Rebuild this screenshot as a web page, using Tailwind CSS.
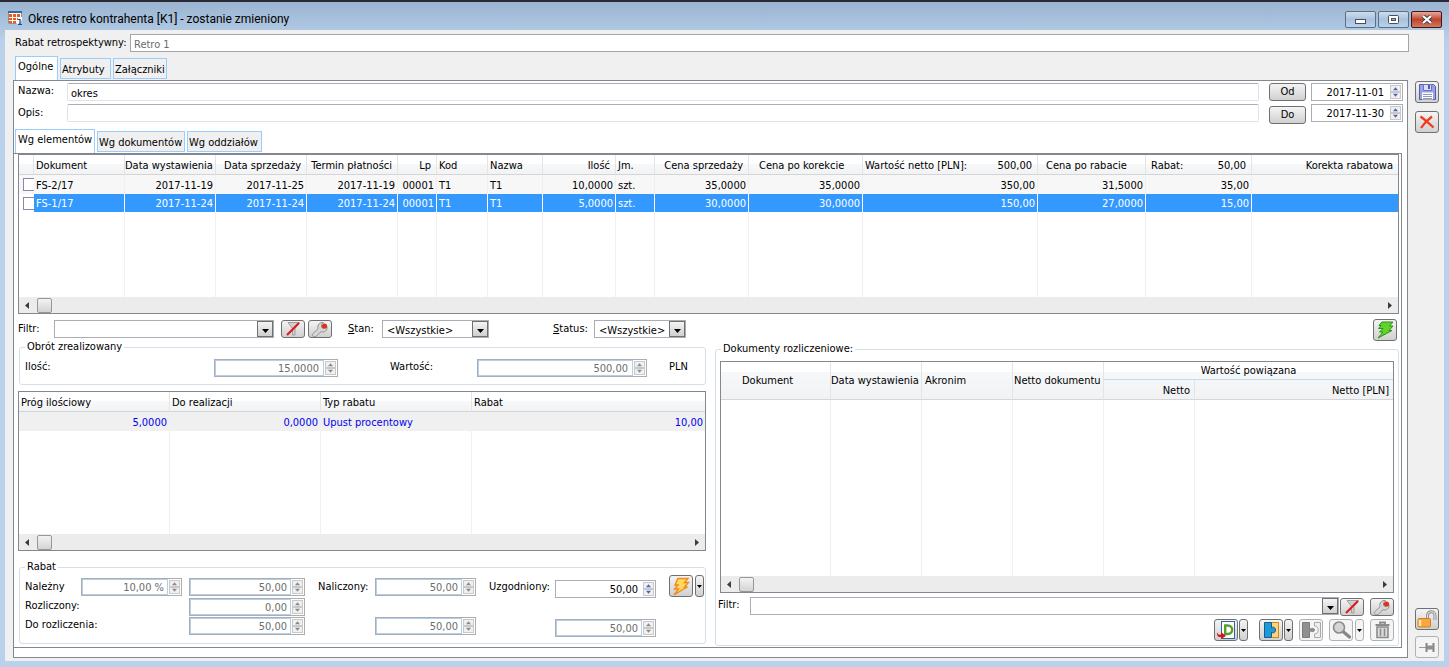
<!DOCTYPE html>
<html lang="pl">
<head>
<meta charset="utf-8">
<title>Okres retro kontrahenta [K1]</title>
<script src="https://cdn.jsdelivr.net/npm/@tailwindcss/browser@4"></script>
</head>
<body class="h-screen overflow-hidden bg-[#b9d1ea] font-['DejaVu_Sans_Condensed','DejaVu_Sans',sans-serif] text-[11px] leading-4 text-black">
<svg class="hidden">
  <symbol id="up" viewBox="0 0 9 6"><path d="M1.500 5h6L4.500 1.500z" fill="currentColor"/></symbol>
  <symbol id="down" viewBox="0 0 9 6"><path d="M1.500 1h6L4.500 4.500z" fill="currentColor"/></symbol>
  <symbol id="drop" viewBox="0 0 7 4"><path d="M0 0h7L3.500 4z" fill="currentColor"/></symbol>
  <symbol id="left" viewBox="0 0 4 7"><path d="M4 0v7L0 3.500z" fill="#3c3c3c"/></symbol>
  <symbol id="right" viewBox="0 0 4 7"><path d="M0 0v7L4 3.500z" fill="#3c3c3c"/></symbol>
  <symbol id="funnel" viewBox="0 0 16 16">
    <path d="M3 1.500h11.500L10 7.500V14H7.500V7.500z" fill="#d0d0d0" stroke="#a0a0a0"/>
    <path d="M2 14L14 2" stroke="#e0191c" stroke-width="2.200"/>
  </symbol>
  <symbol id="wrench" viewBox="0 0 18 16">
    <path d="M1.500 13l5.500-5.200C6 4 8.500 1 12.500 1.500L10.500 4v2.500l2.500 1 3-2c.8 3.500-2.500 6.500-6 5.200L5.500 15C3 16.500.5 15 1.500 13z" fill="#d6d6d6" stroke="#929292"/>
    <circle cx="13.500" cy="5" r="2.600" fill="#e0311b"/>
  </symbol>
</svg>

<div class="flex h-full flex-col border-t-2 border-[#2a2a35] bg-linear-to-b from-[#9ab3d0] to-[#b9d1ea] to-6%">
  <header class="flex h-7 shrink-0 items-center gap-1.5 pr-[7px] pl-2">
    <svg class="mt-1 h-4 w-3.5" viewBox="0 0 14 16"><path d="M0 1h14v9l-4 4H0z" fill="#fff"/><rect x="0" y="1" width="14" height="2" fill="#34699c"/><path d="M.5 3v10.500h8M13.500 3v4" stroke="#8a8f98" fill="none"/><g fill="#f2581c"><path d="M1 4h3v3H1zM5 4h3v3H5zM9 4h3v3H9zM1 8h3v2H1zM5 8h3v2H5zM9 8h1v2H9zM1 11h3v2H1zM5 11h3v2H5z"/></g><path d="M10 9.500h2V14M10 14.500h4" fill="none" stroke="#1a4a80" stroke-width="1.200"/></svg>
    <h1 class="mt-1.5 flex-1 font-[Roboto,sans-serif] text-xs leading-4">Okres retro kontrahenta [K1] - zostanie zmieniony</h1>
    <div class="mt-1.5 flex gap-0.5">
      <button aria-label="Minimalizuj" class="grid h-[17px] w-[31px] place-items-center rounded-xs border border-[#5c6f88] bg-linear-to-b from-[#cfdded] via-[#a9c1dc] to-[#b9d2ec]"><svg class="mt-1 h-[5px] w-[11px]" viewBox="0 0 11 5"><rect x=".5" y=".5" width="10" height="4" fill="#fff" stroke="#44505f"/></svg></button>
      <button aria-label="Maksymalizuj" class="grid h-[17px] w-[31px] place-items-center rounded-xs border border-[#5c6f88] bg-linear-to-b from-[#cfdded] via-[#a9c1dc] to-[#b9d2ec]"><svg class="h-[9px] w-[11px]" viewBox="0 0 11 9"><rect x=".5" y=".5" width="10" height="8" rx="1" fill="#fff" stroke="#44505f"/><rect x="3.500" y="3.500" width="4" height="2" fill="#9db7d4" stroke="#44505f"/></svg></button>
      <button aria-label="Zamknij" class="grid h-[17px] w-[31px] place-items-center rounded-xs border border-[#43151a] bg-linear-to-b from-[#e5a99c] via-[#c0432e] to-[#cf7a60]"><svg class="h-[9px] w-3" viewBox="0 0 12 9"><path d="M2 1l8 7M10 1L2 8" stroke="#46404a" stroke-width="4"/><path d="M2 1l8 7M10 1L2 8" stroke="#fff" stroke-width="2.200"/></svg></button>
    </div>
  </header>

  <main class="mr-[5px] mb-1.5 ml-[5px] flex min-h-0 flex-1 flex-col bg-[#f0f0f0] [&_input]:pt-0.5">
    <div class="mt-1 mr-[35px] ml-2.5 flex shrink-0 items-center">
      <label for="retro" class="w-[115px] whitespace-nowrap">Rabat retrospektywny:</label>
      <input id="retro" disabled value="Retro 1" class="h-[18px] min-w-0 flex-1 border border-[#a5a5a5] bg-white px-[3px] text-[#6d6d6d]">
    </div>
    <div class="flex min-h-0 flex-1 pr-[5px]">
      <div class="mb-[3px] ml-2 flex min-h-0 min-w-0 flex-1 flex-col">
        <nav class="mt-1 flex h-6 shrink-0 items-end gap-0.5 pl-0.5">
          <button class="h-6 w-[43px] border border-b-0 border-[#99ccff] bg-white pb-[3px] pl-0.5 text-left">Ogólne</button>
          <button class="mb-px h-[21px] w-[51px] border border-[#99ccff] pt-0.5 pl-px text-left">Atrybuty</button>
          <button class="mb-px h-[21px] w-[54px] border border-[#99ccff] pt-0.5 pl-px text-left">Załączniki</button>
        </nav>
        <div class="flex min-h-0 flex-1 flex-col border border-[#828790] bg-white">
          <section class="flex h-12 shrink-0 pt-0.5 pr-1 pl-1">
            <div class="flex min-w-0 flex-1 flex-col gap-[3px]">
              <div class="flex"><label for="nazwa" class="w-[49px]">Nazwa:</label><input id="nazwa" value="okres" class="h-[18px] min-w-0 flex-1 rounded-xs border border-[#dfe2ea] border-t-[#abadb3] px-[3px]"></div>
              <div class="flex"><label for="opis" class="w-[49px] pt-px">Opis:</label><input id="opis" class="h-[18px] min-w-0 flex-1 rounded-xs border border-[#dfe2ea] border-t-[#abadb3] px-[3px]"></div>
            </div>
            <div class="ml-2.5 flex flex-col gap-[5px]">
              <button class="h-[18px] w-[37px] rounded-[3px] border border-[#707070] bg-linear-to-b from-[#f4f4f4] to-[#d0d0d0]">Od</button>
              <button class="h-[18px] w-[37px] rounded-[3px] border border-[#707070] bg-linear-to-b from-[#f4f4f4] to-[#d0d0d0]">Do</button>
            </div>
            <div class="ml-[5px] flex flex-col gap-[3px]">
              <div class="flex h-[18px] w-[92px] border border-[#abadb3]"><input aria-label="Od" value="2017-11-01" class="min-w-0 flex-1 pr-[5px] text-right"><span class="m-px flex w-[11px] flex-col text-[#4d62b5]"><button aria-label="Więcej" class="h-[7px] border border-[#c9c9c9] bg-[#f0f0f0]"><svg class="h-[5px] w-[9px]"><use href="#up"/></svg></button><button aria-label="Mniej" class="h-[7px] border border-[#c9c9c9] bg-[#f0f0f0]"><svg class="h-[5px] w-[9px]"><use href="#down"/></svg></button></span></div>
              <div class="flex h-[18px] w-[92px] border border-[#abadb3]"><input aria-label="Do" value="2017-11-30" class="min-w-0 flex-1 pr-[5px] text-right"><span class="m-px flex w-[11px] flex-col text-[#4d62b5]"><button aria-label="Więcej" class="h-[7px] border border-[#c9c9c9] bg-[#f0f0f0]"><svg class="h-[5px] w-[9px]"><use href="#up"/></svg></button><button aria-label="Mniej" class="h-[7px] border border-[#c9c9c9] bg-[#f0f0f0]"><svg class="h-[5px] w-[9px]"><use href="#down"/></svg></button></span></div>
            </div>
          </section>
          <nav class="flex h-6 shrink-0 items-end gap-0.5 pl-px whitespace-nowrap">
            <button class="h-6 w-20 border border-b-0 border-[#99ccff] bg-white pb-[3px] pl-0.5 text-left">Wg elementów</button>
            <button class="mb-px h-[21px] w-[88px] border border-[#99ccff] bg-[#f0f0f0] pt-0.5 pl-px text-left">Wg dokumentów</button>
            <button class="mb-px h-[21px] w-[75px] border border-[#99ccff] bg-[#f0f0f0] pt-0.5 pl-px text-left">Wg oddziałów</button>
          </nav>

          <div class="mr-[5px] mb-[9px] flex min-h-0 flex-1 flex-col border-t border-r border-b border-[#828790] pr-0.5 pl-1">
            <div class="flex h-[160px] shrink-0 flex-col border border-[#828790]">
              <table class="w-full flex-1 table-fixed border-separate border-spacing-0 whitespace-nowrap [&_td]:border-r [&_td]:border-[#f0f0f0] [&_td]:px-0.5 [&_td]:pt-0.5 [&_td]:pb-0 [&_td:first-child]:border-r-0 [&_td:first-child]:pt-0 [&_td:last-child]:border-r-0 [&_th]:border-r [&_th]:border-b [&_th]:border-[#e3e4e6] [&_th]:border-b-[#d5d5d5] [&_th]:px-0.5 [&_th]:pt-[3px] [&_th]:pb-0 [&_th]:font-normal [&_th:last-child]:border-r-0">
                <colgroup><col class="w-[15px]"><col class="w-[91px]"><col class="w-[91px]"><col class="w-[91px]"><col class="w-[91px]"><col class="w-[39px]"><col class="w-[51px]"><col class="w-[55px]"><col class="w-[73px]"><col class="w-[39px]"><col class="w-[94px]"><col class="w-[114px]"><col class="w-[175px]"><col class="w-[108px]"><col class="w-[106px]"><col></colgroup>
                <thead><tr class="h-5 bg-linear-to-b from-white from-45% via-[#f7f8fa] via-45% to-[#f1f2f4]">
                  <th></th><th class="text-left">Dokument</th><th><div class="-ml-0.5 text-left">Data wystawienia</div></th><th><div class="pr-[3px] text-right">Data sprzedaży</div></th><th><div class="pr-[3px] text-right">Termin płatności</div></th><th><div class="pr-[3px] text-right">Lp</div></th><th class="text-left">Kod</th><th class="text-left">Nazwa</th><th><div class="pr-[3px] text-right">Ilość</div></th><th class="text-left">Jm.</th><th><div class="pr-[3px] text-right">Cena sprzedaży</div></th><th><div class="pl-2 text-left">Cena po korekcie</div></th><th><div class="flex justify-between pr-[3px]"><span>Wartość netto [PLN]:</span><span>500,00</span></div></th><th><div class="pl-1.5 text-left">Cena po rabacie</div></th><th><div class="flex justify-between pr-[3px] pl-[3px]"><span>Rabat:</span><span>50,00</span></div></th><th><div class="pr-[3px] text-right">Korekta rabatowa</div></th>
                </tr></thead>
                <tbody>
                  <tr class="h-[19px] bg-[#f7f7f7] text-right">
                    <td><input type="checkbox" aria-label="FS-2/17" class="ml-0.5 block h-[13px] w-[11px] appearance-none border border-r-0 border-[#8f85a8] bg-white"></td><td class="text-left">FS-2/17</td><td>2017-11-19</td><td>2017-11-25</td><td>2017-11-19</td><td>00001</td><td class="text-left">T1</td><td class="text-left">T1</td><td>10,0000</td><td class="text-left">szt.</td><td>35,0000</td><td>35,0000</td><td>350,00</td><td>31,5000</td><td>35,00</td><td></td>
                  </tr>
                  <tr class="h-[18px] text-right text-white [&>td]:border-white [&>td+td]:bg-[#3399ff]">
                    <td><input type="checkbox" aria-label="FS-1/17" class="ml-0.5 block h-[13px] w-[11px] appearance-none border border-r-0 border-[#8f85a8] bg-white"></td><td class="text-left">FS-1/17</td><td>2017-11-24</td><td>2017-11-24</td><td>2017-11-24</td><td>00001</td><td class="text-left">T1</td><td class="text-left">T1</td><td>5,0000</td><td class="text-left">szt.</td><td>30,0000</td><td>30,0000</td><td>150,00</td><td>27,0000</td><td>15,00</td><td></td>
                  </tr>
                  <tr><td></td><td></td><td></td><td></td><td></td><td></td><td></td><td></td><td></td><td></td><td></td><td></td><td></td><td></td><td></td><td></td></tr>
                </tbody>
              </table>
              <div class="flex h-4 shrink-0 items-center bg-[#ececec] px-1.5"><svg class="h-[7px] w-1"><use href="#left"/></svg><span class="ml-2 h-[15px] w-[15px] rounded-xs border border-[#979797] bg-linear-to-b from-[#f3f3f3] to-[#d4d4d4]"></span><svg class="ml-auto h-[7px] w-1"><use href="#right"/></svg></div>
            </div>

            <div class="flex h-[29px] shrink-0 items-start pt-1.5 whitespace-nowrap">
              <label for="filtr" class="w-9 pt-px">Filtr:</label>
              <div class="flex h-[18px] w-[220px] border border-[#abadb3]"><input id="filtr" class="min-w-0 flex-1 px-1"><button aria-label="Rozwiń" class="grid w-4 place-items-center border border-[#707070] bg-linear-to-b from-[#f4f4f4] to-[#d0d0d0]"><svg class="mt-1 h-1 w-[7px]"><use href="#drop"/></svg></button></div>
              <button aria-label="Wyczyść filtr" class="ml-[7px] grid h-[18px] w-6 place-items-center rounded-[3px] border border-[#707070] bg-linear-to-b from-[#f4f4f4] to-[#d0d0d0]"><svg class="size-4"><use href="#funnel"/></svg></button>
              <button aria-label="Konstruktor filtra" class="ml-[3px] grid h-[18px] w-6 place-items-center rounded-[3px] border border-[#707070] bg-linear-to-b from-[#f4f4f4] to-[#d0d0d0]"><svg class="h-4 w-[18px]"><use href="#wrench"/></svg></button>
              <label for="stan" class="ml-4 w-[34px] pt-px"><u>S</u>tan:</label>
              <div class="relative h-[18px] w-[107px]"><select id="stan" class="h-full w-full appearance-none border border-[#abadb3] pt-0.5 pl-1"><option>&lt;Wszystkie&gt;</option></select><span class="pointer-events-none absolute inset-y-px right-px grid w-4 place-items-center border border-[#707070] bg-linear-to-b from-[#f4f4f4] to-[#d0d0d0]"><svg class="mt-1 h-1 w-[7px]"><use href="#drop"/></svg></span></div>
              <label for="status" class="ml-16 w-[41px] pt-px"><u>S</u>tatus:</label>
              <div class="relative h-[18px] w-[92px]"><select id="status" class="h-full w-full appearance-none border border-[#abadb3] pt-0.5 pl-1"><option>&lt;Wszystkie&gt;</option></select><span class="pointer-events-none absolute inset-y-px right-px grid w-4 place-items-center border border-[#707070] bg-linear-to-b from-[#f4f4f4] to-[#d0d0d0]"><svg class="mt-1 h-1 w-[7px]"><use href="#drop"/></svg></span></div>
              <button aria-label="Przelicz" class="-mt-px mr-0.5 ml-auto grid h-[22px] w-6 shrink-0 place-items-center rounded-[3px] border border-[#707070] bg-linear-to-b from-[#f4f4f4] to-[#d0d0d0]"><svg class="h-[18px] w-[17px]" viewBox="0 0 17 18"><path d="M5 1h11l-3.500 4H16l-4 4.500h3L9.500 12.500 1 17l5-6H2.500L6 7.500H1.500L4 4.500H2z" fill="#5fd52b" stroke="#2f8f12"/></svg></button>
            </div>

            <div class="flex min-h-0 flex-1 gap-[9px]">
              <div class="flex w-[688px] shrink-0 flex-col">
                <fieldset class="-mt-1 ml-px h-[46px] shrink-0 rounded-[3px] border border-[#d5dfe5]">
                  <legend class="ml-[5px] px-0.5">Obrót zrealizowany</legend>
                  <div class="mt-1 flex items-start pl-[5px]">
                    <label for="ilosc" class="w-[189px]">Ilość:</label>
                    <div class="flex h-[18px] w-[124px] border border-[#abadb3] text-[#8a8a8a]"><input id="ilosc" disabled value="15,0000" class="min-w-0 flex-1 border border-[#b5cfe7] pr-1 text-right text-[#6d6d6d]"><span class="m-px flex w-[11px] flex-col"><button disabled aria-label="Więcej" class="h-[7px] border border-[#c9c9c9] bg-[#f0f0f0]"><svg class="h-[5px] w-[9px]"><use href="#up"/></svg></button><button disabled aria-label="Mniej" class="h-[7px] border border-[#c9c9c9] bg-[#f0f0f0]"><svg class="h-[5px] w-[9px]"><use href="#down"/></svg></button></span></div>
                    <label for="wartosc" class="ml-[52px] w-[87px]">Wartość:</label>
                    <div class="flex h-[18px] w-[170px] border border-[#abadb3] text-[#8a8a8a]"><input id="wartosc" disabled value="500,00" class="min-w-0 flex-1 border border-[#b5cfe7] pr-1 text-right text-[#6d6d6d]"><span class="m-px flex w-[11px] flex-col"><button disabled aria-label="Więcej" class="h-[7px] border border-[#c9c9c9] bg-[#f0f0f0]"><svg class="h-[5px] w-[9px]"><use href="#up"/></svg></button><button disabled aria-label="Mniej" class="h-[7px] border border-[#c9c9c9] bg-[#f0f0f0]"><svg class="h-[5px] w-[9px]"><use href="#down"/></svg></button></span></div>
                    <span class="ml-[22px]">PLN</span>
                  </div>
                </fieldset>

                <div class="mt-1.5 flex min-h-0 flex-1 flex-col border border-[#828790]">
                  <table class="w-full flex-1 table-fixed border-separate border-spacing-0 [&_td]:border-r [&_td]:border-[#f0f0f0] [&_td]:px-0.5 [&_td]:pt-[3px] [&_td]:pb-0 [&_td:last-child]:border-r-0 [&_th]:border-r [&_th]:border-b [&_th]:border-[#e3e4e6] [&_th]:border-b-[#d5d5d5] [&_th]:px-0.5 [&_th]:pt-0.5 [&_th]:pb-0 [&_th]:text-left [&_th]:font-normal [&_th:last-child]:border-r-0">
                    <colgroup><col class="w-[151px]"><col class="w-[151px]"><col class="w-[151px]"><col></colgroup>
                    <thead><tr class="h-5 bg-linear-to-b from-white from-45% via-[#f7f8fa] via-45% to-[#f1f2f4]"><th>Próg ilościowy</th><th>Do realizacji</th><th>Typ rabatu</th><th>Rabat</th></tr></thead>
                    <tbody>
                      <tr class="h-[19px] bg-[#f0f0f0] text-right text-[#0000ee]"><td>5,0000</td><td>0,0000</td><td class="text-left">Upust procentowy</td><td>10,00</td></tr>
                      <tr><td></td><td></td><td></td><td></td></tr>
                    </tbody>
                  </table>
                  <div class="flex h-4 shrink-0 items-center bg-[#ececec] px-1.5"><svg class="h-[7px] w-1"><use href="#left"/></svg><span class="ml-2 h-[15px] w-[15px] rounded-xs border border-[#979797] bg-linear-to-b from-[#f3f3f3] to-[#d4d4d4]"></span><svg class="ml-auto h-[7px] w-1"><use href="#right"/></svg></div>
                </div>

                <fieldset class="mt-2 mb-[3px] ml-px h-[85px] shrink-0 rounded-[3px] border border-[#d5dfe5]">
                  <legend class="ml-[5px] px-0.5">Rabat</legend>
                  <div class="flex pl-[5px]">
                    <div class="flex w-16 flex-col gap-[3px] pt-1 whitespace-nowrap"><label for="nal">Należny</label><label for="roz">Rozliczony:</label><label for="dor">Do rozliczenia:</label></div>
                    <div class="-ml-2 flex pt-[3px]">
                      <div class="flex h-[18px] w-[101px] border border-[#abadb3] text-[#8a8a8a]"><input id="nal" disabled value="10,00 %" class="min-w-0 flex-1 border border-[#b5cfe7] pr-[3px] text-right text-[#6d6d6d]"><span class="m-px flex w-[11px] flex-col"><button disabled aria-label="Więcej" class="h-[7px] border border-[#c9c9c9] bg-[#f0f0f0]"><svg class="h-[5px] w-[9px]"><use href="#up"/></svg></button><button disabled aria-label="Mniej" class="h-[7px] border border-[#c9c9c9] bg-[#f0f0f0]"><svg class="h-[5px] w-[9px]"><use href="#down"/></svg></button></span></div>
                    </div>
                    <div class="ml-[7px] flex flex-col gap-px pt-[3px]">
                      <div class="flex h-[18px] w-[116px] border border-[#abadb3] text-[#8a8a8a]"><input aria-label="Należny" disabled value="50,00" class="min-w-0 flex-1 border border-[#b5cfe7] pr-[3px] text-right text-[#6d6d6d]"><span class="m-px flex w-[11px] flex-col"><button disabled aria-label="Więcej" class="h-[7px] border border-[#c9c9c9] bg-[#f0f0f0]"><svg class="h-[5px] w-[9px]"><use href="#up"/></svg></button><button disabled aria-label="Mniej" class="h-[7px] border border-[#c9c9c9] bg-[#f0f0f0]"><svg class="h-[5px] w-[9px]"><use href="#down"/></svg></button></span></div>
                      <div class="mt-px flex h-[18px] w-[116px] border border-[#abadb3] text-[#8a8a8a]"><input id="roz" disabled value="0,00" class="min-w-0 flex-1 border border-[#b5cfe7] pr-[3px] text-right text-[#6d6d6d]"><span class="m-px flex w-[11px] flex-col"><button disabled aria-label="Więcej" class="h-[7px] border border-[#c9c9c9] bg-[#f0f0f0]"><svg class="h-[5px] w-[9px]"><use href="#up"/></svg></button><button disabled aria-label="Mniej" class="h-[7px] border border-[#c9c9c9] bg-[#f0f0f0]"><svg class="h-[5px] w-[9px]"><use href="#down"/></svg></button></span></div>
                      <div class="flex h-[18px] w-[116px] border border-[#abadb3] text-[#8a8a8a]"><input id="dor" disabled value="50,00" class="min-w-0 flex-1 border border-[#b5cfe7] pr-[3px] text-right text-[#6d6d6d]"><span class="m-px flex w-[11px] flex-col"><button disabled aria-label="Więcej" class="h-[7px] border border-[#c9c9c9] bg-[#f0f0f0]"><svg class="h-[5px] w-[9px]"><use href="#up"/></svg></button><button disabled aria-label="Mniej" class="h-[7px] border border-[#c9c9c9] bg-[#f0f0f0]"><svg class="h-[5px] w-[9px]"><use href="#down"/></svg></button></span></div>
                    </div>
                    <label for="nalicz" class="ml-[13px] w-[57px] pt-1">Naliczony:</label>
                    <div class="flex flex-col gap-[21px] pt-[3px]">
                      <div class="flex h-[18px] w-[101px] border border-[#abadb3] text-[#8a8a8a]"><input id="nalicz" disabled value="50,00" class="min-w-0 flex-1 border border-[#b5cfe7] pr-[3px] text-right text-[#6d6d6d]"><span class="m-px flex w-[11px] flex-col"><button disabled aria-label="Więcej" class="h-[7px] border border-[#c9c9c9] bg-[#f0f0f0]"><svg class="h-[5px] w-[9px]"><use href="#up"/></svg></button><button disabled aria-label="Mniej" class="h-[7px] border border-[#c9c9c9] bg-[#f0f0f0]"><svg class="h-[5px] w-[9px]"><use href="#down"/></svg></button></span></div>
                      <div class="flex h-[18px] w-[101px] border border-[#abadb3] text-[#8a8a8a]"><input aria-label="Naliczony do rozliczenia" disabled value="50,00" class="min-w-0 flex-1 border border-[#b5cfe7] pr-[3px] text-right text-[#6d6d6d]"><span class="m-px flex w-[11px] flex-col"><button disabled aria-label="Więcej" class="h-[7px] border border-[#c9c9c9] bg-[#f0f0f0]"><svg class="h-[5px] w-[9px]"><use href="#up"/></svg></button><button disabled aria-label="Mniej" class="h-[7px] border border-[#c9c9c9] bg-[#f0f0f0]"><svg class="h-[5px] w-[9px]"><use href="#down"/></svg></button></span></div>
                    </div>
                    <label for="uzg" class="ml-[13px] w-[66px] pt-1">Uzgodniony:</label>
                    <div class="flex flex-col gap-[21px] pt-[5px]">
                      <div class="flex h-[18px] w-[101px] border border-[#abadb3] text-[#4d62b5]"><input id="uzg" value="50,00" class="min-w-0 flex-1 pr-1 text-right text-black"><span class="m-px flex w-[11px] flex-col"><button aria-label="Więcej" class="h-[7px] border border-[#c9c9c9] bg-[#f0f0f0]"><svg class="h-[5px] w-[9px]"><use href="#up"/></svg></button><button aria-label="Mniej" class="h-[7px] border border-[#c9c9c9] bg-[#f0f0f0]"><svg class="h-[5px] w-[9px]"><use href="#down"/></svg></button></span></div>
                      <div class="flex h-[18px] w-[101px] border border-[#abadb3] text-[#8a8a8a]"><input aria-label="Uzgodniony do rozliczenia" disabled value="50,00" class="min-w-0 flex-1 border border-[#b5cfe7] pr-[3px] text-right text-[#6d6d6d]"><span class="m-px flex w-[11px] flex-col"><button disabled aria-label="Więcej" class="h-[7px] border border-[#c9c9c9] bg-[#f0f0f0]"><svg class="h-[5px] w-[9px]"><use href="#up"/></svg></button><button disabled aria-label="Mniej" class="h-[7px] border border-[#c9c9c9] bg-[#f0f0f0]"><svg class="h-[5px] w-[9px]"><use href="#down"/></svg></button></span></div>
                    </div>
                    <div class="ml-[13px] flex gap-0.5">
                      <button aria-label="Generuj" class="grid h-[22px] w-6 place-items-center rounded-[3px] border border-[#707070] bg-linear-to-b from-[#f4f4f4] to-[#d0d0d0]"><svg class="h-[19px] w-[18px]" viewBox="0 0 18 19"><path d="M6 1.500h10L12.500 5.500h4l-4 4.500h3L10 13l-8 5 4.500-6H2.500L6 8H3z" fill="#ffd95e" stroke="#f08a1d" stroke-width="1.400"/></svg></button>
                      <button aria-label="Więcej opcji" class="grid h-[22px] w-[9px] place-items-center rounded-[3px] border border-[#707070] bg-linear-to-b from-[#f4f4f4] to-[#d0d0d0]"><svg class="h-[3px] w-[5px]" viewBox="0 0 7 4"><path d="M0 0h7L3.500 4z"/></svg></button>
                    </div>
                  </div>
                </fieldset>
              </div>

              <fieldset class="-mt-0.5 mb-px flex min-w-0 flex-1 flex-col rounded-[3px] border border-[#d5dfe5] pr-1 pl-1">
                <legend class="ml-px px-0.5">Dokumenty rozliczeniowe:</legend>
                <div class="flex h-full flex-col">
                  <div class="mt-1 flex min-h-0 flex-1 flex-col border border-[#828790]">
                    <table class="w-full flex-1 table-fixed border-separate border-spacing-0 whitespace-nowrap [&_td]:border-r [&_td]:border-[#f0f0f0] [&_td]:p-0 [&_td:last-child]:border-r-0 [&_th]:border-r [&_th]:border-b [&_th]:border-[#e3e4e6] [&_th]:border-b-[#d5d5d5] [&_th]:p-0 [&_th]:pt-px [&_th]:font-normal [&_th:last-child]:border-r-0">
                      <colgroup><col class="w-[110px]"><col class="w-[91px]"><col class="w-[91px]"><col class="w-[91px]"><col class="w-[91px]"><col></colgroup>
                      <thead class="bg-linear-to-b from-white from-25% via-[#f7f8fa] via-25% to-[#f1f2f4]">
                        <tr class="h-[18px]"><th rowspan="2"><div class="pl-[21px] text-left">Dokument</div></th><th rowspan="2" class="text-left">Data wystawienia</th><th rowspan="2"><div class="pl-[3px] text-left">Akronim</div></th><th rowspan="2" class="text-left"><div class="pl-px">Netto dokumentu</div></th><th colspan="2" class="!border-b-[#bfdbec]">Wartość powiązana</th></tr>
                        <tr class="h-5"><th><div class="pt-0.5 pr-1 text-right">Netto</div></th><th><div class="pt-0.5 pr-1 text-right">Netto [PLN]</div></th></tr>
                      </thead>
                      <tbody><tr><td></td><td></td><td></td><td></td><td></td><td></td></tr></tbody>
                    </table>
                    <div class="flex h-4 shrink-0 items-center bg-[#ececec] px-1.5"><svg class="h-[7px] w-1"><use href="#left"/></svg><span class="ml-2 h-[15px] w-[15px] rounded-xs border border-[#979797] bg-linear-to-b from-[#f3f3f3] to-[#d4d4d4]"></span><svg class="ml-auto h-[7px] w-1"><use href="#right"/></svg></div>
                  </div>
                  <div class="mt-1 flex shrink-0">
                    <label for="filtr2" class="-ml-0.5 w-8">Filtr:</label>
                    <div class="flex h-[18px] min-w-0 flex-1 border border-[#abadb3]"><input id="filtr2" class="min-w-0 flex-1 px-1"><button aria-label="Rozwiń" class="grid w-4 place-items-center border border-[#707070] bg-linear-to-b from-[#f4f4f4] to-[#d0d0d0]"><svg class="mt-1 h-1 w-[7px]"><use href="#drop"/></svg></button></div>
                    <button aria-label="Wyczyść filtr" class="mt-px ml-px grid h-[18px] w-6 place-items-center rounded-[3px] border border-[#707070] bg-linear-to-b from-[#f4f4f4] to-[#d0d0d0]"><svg class="size-4"><use href="#funnel"/></svg></button>
                    <button aria-label="Konstruktor filtra" class="mt-px ml-1.5 grid h-[18px] w-6 place-items-center rounded-[3px] border border-[#707070] bg-linear-to-b from-[#f4f4f4] to-[#d0d0d0]"><svg class="h-4 w-[18px]"><use href="#wrench"/></svg></button>
                  </div>
                  <div class="mt-[3px] mb-1 flex shrink-0 justify-end">
                    <button aria-label="Generuj dokument" class="grid h-[22px] w-6 place-items-center rounded-[3px] border border-[#707070] bg-linear-to-b from-[#f4f4f4] to-[#d0d0d0]"><svg class="h-[18px] w-5" viewBox="0 0 20 18"><rect x="5.500" y=".5" width="13" height="17" fill="#fff" stroke="#31659c"/><path d="M9.200 4.500h2.500c6 0 6 8.500 0 8.500H9.200z" fill="none" stroke="#5a9e27" stroke-width="2.400"/><path d="M1 11c.3 2.500 2 3 4 2.500V11l5 4-5 3v-2C2 16.500.5 14 1 11z" fill="#d3121f"/></svg></button>
                    <button aria-label="Opcje dokumentu" class="ml-px grid h-[22px] w-[9px] place-items-center rounded-[3px] border border-[#707070] bg-linear-to-b from-[#f4f4f4] to-[#d0d0d0]"><svg class="h-[3px] w-[5px]" viewBox="0 0 7 4"><path d="M0 0h7L3.500 4z"/></svg></button>
                    <button aria-label="Powiąż" class="ml-[11px] grid h-[22px] w-6 place-items-center rounded-[3px] border border-[#707070] bg-linear-to-b from-[#f4f4f4] to-[#d0d0d0]"><svg class="h-4 w-[15px]" viewBox="0 0 15 16"><rect x="7.500" y=".5" width="7" height="15" fill="#ffd27a" stroke="#c98a1e"/><path d="M.5.500h7V6c1-1.500 4-1 4 2s-3 3.500-4 2v5.500h-7z" fill="#1f9ad6" stroke="#145f8f"/></svg></button>
                    <button aria-label="Opcje powiązania" class="ml-px grid h-[22px] w-[9px] place-items-center rounded-[3px] border border-[#707070] bg-linear-to-b from-[#f4f4f4] to-[#d0d0d0]"><svg class="h-[3px] w-[5px]" viewBox="0 0 7 4"><path d="M0 0h7L3.500 4z"/></svg></button>
                    <button disabled aria-label="Rozwiąż" class="ml-1.5 grid h-[22px] w-6 place-items-center rounded-[3px] border border-[#adb2b5] bg-[#f4f4f4]"><svg class="h-4 w-[19px]" viewBox="0 0 19 16"><path d="M.5.500h7V7h1.500c2-1.500 3.500 0 3.500 1s-1.500 2.500-3.500 1H7.500v6.500h-7z" fill="#909090" stroke="#7c7c7c"/><path d="M12.500.500h6v15h-6V12c5 0 5-8 0-8z" fill="#eee" stroke="#aaa"/></svg></button>
                    <button disabled aria-label="Podgląd" class="ml-1.5 grid h-[22px] w-6 place-items-center rounded-[3px] border border-[#adb2b5] bg-[#f4f4f4]"><svg class="h-[18px] w-[19px]" viewBox="0 0 19 18"><path d="M11 10.500l6.500 5.500" stroke="#858585" stroke-width="3.200" stroke-linecap="round"/><circle cx="7" cy="6.500" r="5.500" fill="#d4d4d4" stroke="#8c8c8c" stroke-width="1.600"/></svg></button>
                    <button disabled aria-label="Opcje podglądu" class="ml-0.5 grid h-[22px] w-[9px] place-items-center rounded-[3px] border border-[#adb2b5] bg-[#f4f4f4]"><svg class="h-[3px] w-[5px]" viewBox="0 0 7 4"><path d="M0 0h7L3.500 4z"/></svg></button>
                    <button disabled aria-label="Usuń" class="ml-1.5 grid h-[22px] w-6 place-items-center rounded-[3px] border border-[#adb2b5] bg-[#f4f4f4]"><svg class="h-[18px] w-[15px]" viewBox="0 0 15 18"><path d="M.5 4h14M5 3.500V1.500h5v2" fill="none" stroke="#8b8b8b" stroke-width="1.800"/><path d="M2 6h11v10.500H2z" fill="#dcdcdc" stroke="#8b8b8b" stroke-width="1.600"/><path d="M5.500 7.500V15M9.500 7.500V15" stroke="#8b8b8b" stroke-width="1.600"/></svg></button>
                  </div>
                </div>
              </fieldset>
            </div>
          </div>
        </div>
      </div>

      <aside class="mt-[29px] mb-[3px] ml-[7px] flex w-6 shrink-0 flex-col">
        <button aria-label="Zapisz" class="grid h-[22px] w-6 place-items-center rounded-[3px] border border-[#707070] bg-linear-to-b from-[#f4f4f4] to-[#d0d0d0]"><svg class="h-4 w-[17px]" viewBox="0 0 17 16"><path d="M.5.500h14l2 2v13H.5z" fill="#98a0e6" stroke="#555fae"/><path d="M4.500.500h8v6h-8z" fill="#d9ddfb" stroke="#6a73c0"/><path d="M9 1h2v4H9z" fill="#4f59a8"/><path d="M3 8.500h11v7H3z" fill="#fff"/><path d="M4 10.500h9M4 12.500h9M4 14.500h9" stroke="#8f9bb0"/></svg></button>
        <button aria-label="Anuluj" class="mt-2 grid h-[22px] w-6 place-items-center rounded-[3px] border border-[#707070] bg-linear-to-b from-[#f4f4f4] to-[#d0d0d0]"><svg class="h-3.5 w-4" viewBox="0 0 16 14"><path d="M1.500 1.500c3 2 8 6.500 13 11M13 1.500C9 4.500 5 8.500 2 13" fill="none" stroke="#ee3a1e" stroke-width="2.200"/></svg></button>
        <button aria-label="Odblokuj" class="mt-auto grid h-[22px] w-6 place-items-center rounded-[3px] border border-[#707070] bg-linear-to-b from-[#f4f4f4] to-[#d0d0d0]"><svg class="h-[18px] w-5" viewBox="0 0 20 18"><path d="M10.500 9V5.500C10.500.500 18 .500 18 5.500V10" fill="none" stroke="#8d8d8d" stroke-width="3"/><path d="M10.500 9V5.500C10.500.500 18 .500 18 5.500V10" fill="none" stroke="#e2e2e2" stroke-width="1.200"/><rect x="1" y="8.500" width="12.500" height="8.500" rx="1" fill="#f7a83c" stroke="#c98226"/><path d="M3 10v6" stroke="#ffe3a8" stroke-width="2.500"/></svg></button>
        <button disabled aria-label="Przypnij" class="mt-1.5 grid h-[22px] w-6 place-items-center rounded-[3px] border border-[#adb2b5] bg-[#f4f4f4]"><svg class="h-[11px] w-4" viewBox="0 0 16 11"><path d="M0 5.500h7" stroke="#9a9a9a"/><path d="M7.500 1v9M14.500 1v9" stroke="#858585" stroke-width="2"/><path d="M8 3.500h6v4H8z" fill="#8f8f8f"/></svg></button>
      </aside>
    </div>
  </main>
</div>
</body>
</html>
